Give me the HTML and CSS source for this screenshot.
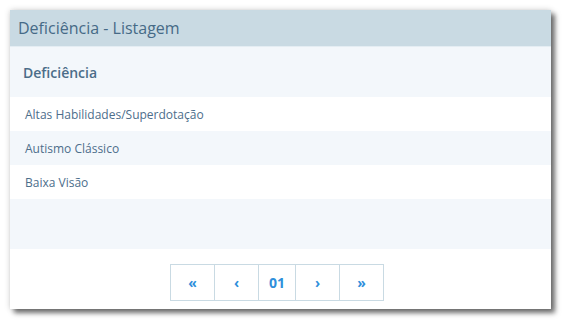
FILE: index.html
```html
<!DOCTYPE html>
<html lang="pt-BR">
<head>
    <meta charset="UTF-8">
    <title>Deficiência - Listagem</title>
    <link rel="stylesheet" href="styles.css">
</head>
<body>
    <div class="panel">
        <div class="panel-header">Deficiência - Listagem</div>

        <table class="list">
            <thead>
                <tr><th>Deficiência</th></tr>
            </thead>
            <tbody>
                <tr><td>Altas Habilidades/Superdotação</td></tr>
                <tr><td>Autismo Clássico</td></tr>
                <tr><td>Baixa Visão</td></tr>
                <tr class="empty"><td></td></tr>
            </tbody>
        </table>

        <div class="pager">
            <a href="#" class="pg">&laquo;</a>
            <a href="#" class="pg">&lsaquo;</a>
            <a href="#" class="pg current">01</a>
            <a href="#" class="pg">&rsaquo;</a>
            <a href="#" class="pg">&raquo;</a>
        </div>
    </div>
</body>
</html>
```

FILE: styles.css
```css
body {
    margin: 0;
    padding: 10px 16px 16px 10px;
    background-color: #ffffff;
    font-family: "Open Sans", Arial, sans-serif;
}

.panel {
    width: 541px;
    height: 299px;
    background-color: #ffffff;
    box-shadow: 0 0 6px rgba(0,0,0,0.18), 4px 4px 5px rgba(0,0,0,0.55);
}

.panel-header {
    height: 37px;
    line-height: 36px;
    padding-left: 8px;
    background-color: #c9dae3;
    color: #466a87;
    font-size: 16px;
    border-bottom: 1px solid #e4edf3;
    box-sizing: border-box;
}

.list {
    width: 100%;
    border-collapse: collapse;
}

.list th {
    height: 50px;
    padding: 0 0 0 13px;
    text-align: left;
    font-size: 14px;
    font-weight: 600;
    color: #4b6d89;
    background-color: #f3f7fb;
}

.list td {
    height: 34px;
    padding: 0 0 0 15px;
    font-size: 12px;
    color: #4d6e8b;
}

.list tbody tr:nth-child(even) td {
    background-color: #f3f7fb;
}

.list tr.empty td {
    height: 50px;
}

.pager {
    display: flex;
    justify-content: center;
    margin-top: 15px;
    padding-right: 6px;
}

.pg {
    width: 45px;
    height: 37px;
    line-height: 35px;
    text-align: center;
    border: 1px solid #c9dae3;
    margin-left: -1px;
    box-sizing: border-box;
    color: #2f8fdb;
    font-size: 14px;
    font-weight: 700;
    text-decoration: none;
}

.pg.current {
    width: 38px;
}
```
